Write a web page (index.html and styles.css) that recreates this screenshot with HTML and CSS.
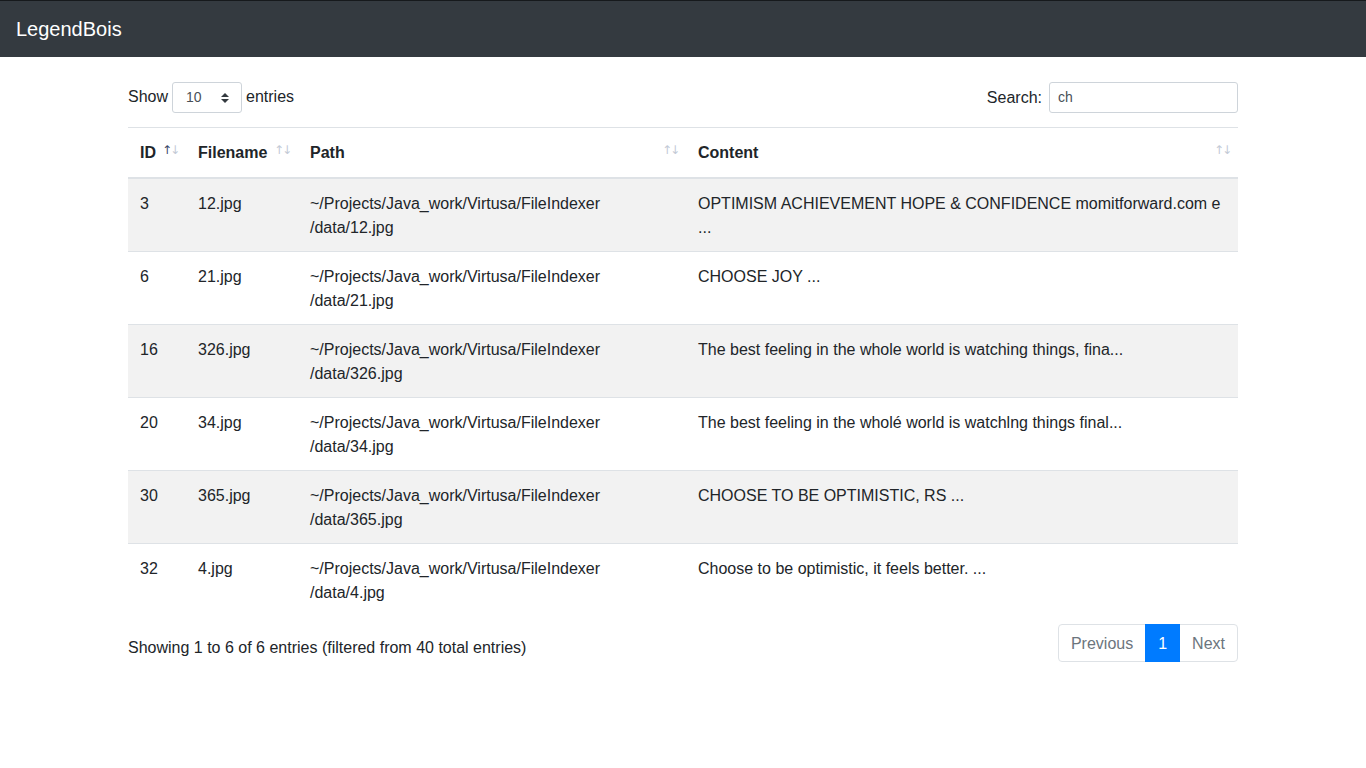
FILE: index.html
```html
<!DOCTYPE html>
<html>
<head>
<meta charset="utf-8">
<title>LegendBois</title>
<link rel="stylesheet" href="styles.css">
</head>
<body>
<nav class="navbar"><span class="brand">LegendBois</span></nav>
<main class="container">
  <div class="toolbar">
    <label class="len">Show <span class="select">10<svg class="caret" width="8" height="10" viewBox="0 0 8 10"><path d="M4 0L8 4H0z M4 10L0 6H8z" fill="#343a40"/></svg></span> entries</label>
    <label class="search">Search: <span class="input">ch</span></label>
  </div>
  <table class="grid">
    <colgroup><col class="c1"><col class="c2"><col class="c3"><col class="c4"></colgroup>
    <thead>
      <tr>
        <th class="sort asc">ID</th>
        <th class="sort">Filename</th>
        <th class="sort">Path</th>
        <th class="sort">Content</th>
      </tr>
    </thead>
    <tbody>
      <tr><td>3</td><td>12.jpg</td><td>~/Projects/Java_work/Virtusa/FileIndexer<br>/data/12.jpg</td><td>OPTIMISM ACHIEVEMENT HOPE &amp; CONFIDENCE momitforward.com e ...</td></tr>
      <tr><td>6</td><td>21.jpg</td><td>~/Projects/Java_work/Virtusa/FileIndexer<br>/data/21.jpg</td><td>CHOOSE JOY ...</td></tr>
      <tr><td>16</td><td>326.jpg</td><td>~/Projects/Java_work/Virtusa/FileIndexer<br>/data/326.jpg</td><td>The best feeling in the whole world is watching things, fina...</td></tr>
      <tr><td>20</td><td>34.jpg</td><td>~/Projects/Java_work/Virtusa/FileIndexer<br>/data/34.jpg</td><td>The best feeling in the wholé world is watchlng things final...</td></tr>
      <tr><td>30</td><td>365.jpg</td><td>~/Projects/Java_work/Virtusa/FileIndexer<br>/data/365.jpg</td><td>CHOOSE TO BE OPTIMISTIC, RS ...</td></tr>
      <tr><td>32</td><td>4.jpg</td><td>~/Projects/Java_work/Virtusa/FileIndexer<br>/data/4.jpg</td><td>Choose to be optimistic, it feels better. ...</td></tr>
    </tbody>
  </table>
  <div class="footer">
    <div class="info">Showing 1 to 6 of 6 entries (filtered from 40 total entries)</div>
    <ul class="pager">
      <li class="page disabled">Previous</li>
      <li class="page active">1</li>
      <li class="page disabled">Next</li>
    </ul>
  </div>
</main>
</body>
</html>
```
FILE: styles.css
```css
* { box-sizing: border-box; }
html, body { margin: 0; padding: 0; }
body {
  font-family: "Liberation Sans", Arial, sans-serif;
  font-size: 16px;
  line-height: 1.5;
  color: #212529;
  background: #fff;
}
.navbar {
  background: #343a40;
  border-top: 1px solid #16191c;
  height: 57px;
  padding: 8px 16px;
  display: flex;
  align-items: center;
}
.brand {
  color: #fff;
  font-size: 20px;
  line-height: 30px;
  padding: 5px 0;
}
.container {
  width: 1110px;
  margin: 0 auto;
  padding-top: 25px;
}
.toolbar {
  display: flex;
  justify-content: space-between;
  align-items: center;
  height: 31px;
}
.len, .search {
  display: flex;
  align-items: center;
  gap: 4px;
  white-space: nowrap;
}
.len { margin-top: -1px; }
.select {
  display: inline-flex;
  align-items: center;
  justify-content: space-between;
  width: 70px;
  height: 31px;
  padding: 4px 12px 4px 13px;
  font-size: 14px;
  color: #495057;
  border: 1px solid #ced4da;
  border-radius: 3px;
  margin-top: 1px;
}
.caret { display: block; }
.search { gap: 7px; }
.input {
  display: inline-block;
  width: 189px;
  height: 31px;
  padding: 4px 8px;
  font-size: 14px;
  line-height: 21px;
  color: #495057;
  border: 1px solid #ced4da;
  border-radius: 3px;
}
.grid {
  width: 1110px;
  margin-top: 14px;
  border-collapse: collapse;
  table-layout: fixed;
}
.c1 { width: 58px; }
.c2 { width: 112px; }
.c3 { width: 388px; }
.c4 { width: 552px; }
.grid th, .grid td {
  padding: 13px 12px 11px;
  text-align: left;
  vertical-align: top;
  border-top: 1px solid #dee2e6;
}
.grid th {
  font-weight: bold;
  border-bottom: 2px solid #dee2e6;
  position: relative;
  padding: 13px 30px 12px 12px;
}
.sort::before, .sort::after {
  position: absolute;
  top: 16px;
  width: 8px;
  text-align: center;
  display: block;
  font-family: "DejaVu Sans", sans-serif;
  font-size: 12px;
  line-height: 12px;
  font-weight: normal;
  color: #c3cad6;
}
.sort::before { content: "\2191"; right: 16px; }
.sort::after { content: "\2193"; right: 8px; }
.sort.asc::before { color: #3a4766; }
.grid tbody tr:nth-child(odd) { background: #f2f2f2; }
.footer {
  display: flex;
  justify-content: space-between;
  align-items: flex-start;
  margin-top: 8px;
}
.info { padding-top: 12px; }
.pager {
  display: flex;
  list-style: none;
  margin: 0;
  padding: 0;
}
.page {
  padding: 7px 12px 5px;
  line-height: 24px;
  border: 1px solid #dee2e6;
  color: #6c757d;
  margin-left: -1px;
}
.page:first-child { border-radius: 4px 0 0 4px; margin-left: 0; }
.page:last-child { border-radius: 0 4px 4px 0; }
.page.active {
  background: #007bff;
  border-color: #007bff;
  color: #fff;
  position: relative;
}
```
